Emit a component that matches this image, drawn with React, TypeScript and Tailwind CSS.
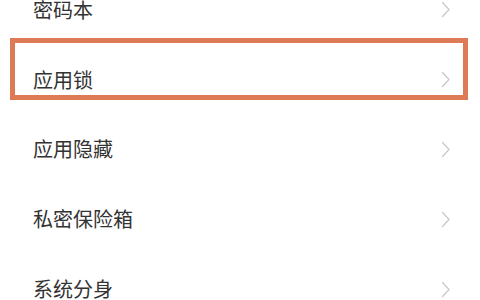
import React from 'react'

const items = ['密码本', '应用锁', '应用隐藏', '私密保险箱', '系统分身']

const Chevron = () => (
  <svg width="10" height="17" viewBox="0 0 10 17" fill="none" className="shrink-0">
    <path d="M1.5 1.5 L8 8.5 L1.5 15.5" stroke="#c9c9c9" strokeWidth="1.3" strokeLinecap="round" strokeLinejoin="round" />
  </svg>
)

export default function App() {
  return (
    <div className="relative w-[480px] h-[300px] overflow-hidden bg-white font-['Noto_Sans_CJK_SC','Noto_Sans',sans-serif]">
      <div className="-mt-[25px] flex flex-col">
        {items.map((name) => (
          <div key={name} className="h-[69.8px] flex items-center justify-between pl-[33px] pr-[29px]">
            <span className="text-[20px] leading-none text-[#333333]">{name}</span>
            <Chevron />
          </div>
        ))}
      </div>
      {/* highlight annotation around 应用锁 */}
      <div className="absolute left-[10px] top-[38px] w-[458px] h-[62px] border-[5px] border-[#dc7b55] pointer-events-none" />
    </div>
  )
}
